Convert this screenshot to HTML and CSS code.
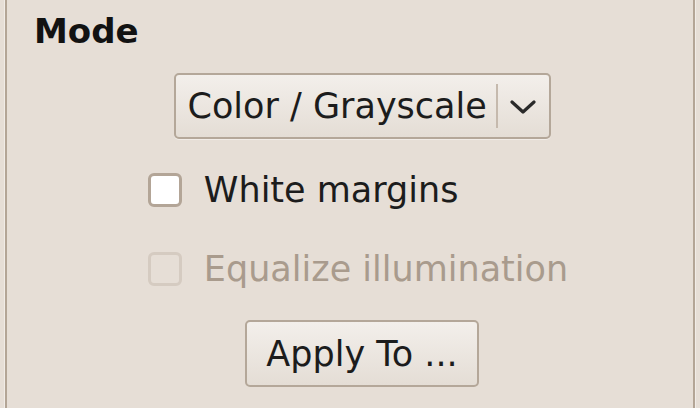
FILE: index.html
```html
<!DOCTYPE html>
<html>
<head>
<meta charset="utf-8">
<link rel="stylesheet" href="styles.css">
</head>
<body>
<div class="frame">
  <div class="content">
    <div class="title">Mode</div>
    <div class="combo">
      <span class="combo-text">Color / Grayscale</span>
      <span class="combo-sep"></span>
      <span class="combo-arrow">
        <svg width="26" height="16" viewBox="0 0 26 16"><polyline points="2,3 13,13 24,3" fill="none" stroke="#2a2a2a" stroke-width="3.2" stroke-linecap="round" stroke-linejoin="round"/></svg>
      </span>
    </div>
    <div class="checks">
      <label class="check">
        <span class="box"></span>
        <span class="check-label">White margins</span>
      </label>
      <label class="check disabled">
        <span class="box"></span>
        <span class="check-label">Equalize illumination</span>
      </label>
    </div>
    <button class="button">Apply To ...</button>
  </div>
</div>
</body>
</html>
```
FILE: styles.css
```css
html, body {
  margin: 0;
  padding: 0;
  background: #e6ded6;
}
body {
  width: 700px;
  height: 408px;
  overflow: hidden;
  font-family: "DejaVu Sans", sans-serif;
  font-size: 35px;
  color: #1c1c1c;
}
.frame {
  margin-left: 5px;
  width: 686px;
  height: 408px;
  border-left: 2px solid #b3a596;
  border-right: 2px solid #b3a596;
  box-shadow: -1px 0 0 #f1ece7, 1px 0 0 #f1ece7;
}
.content {
  display: flex;
  flex-direction: column;
  align-items: center;
  padding-left: 27px;
  padding-right: 0;
  width: 656px;
}
.title {
  align-self: flex-start;
  font-weight: bold;
  font-size: 34px;
  line-height: 40px;
  margin-top: 11px;
  color: #121212;
}
.combo {
  margin-top: 22px;
  box-sizing: border-box;
  width: 377px;
  height: 66px;
  display: flex;
  align-items: center;
  border: 2px solid #b4a799;
  border-radius: 5px;
  background: linear-gradient(#f3efeb, #e4ddd5);
  box-shadow: 0 1px 0 #f1ece7;
}
.combo-text {
  padding-left: 12px;
  line-height: 41px;
  white-space: nowrap;
  width: 308px;
}
.combo-sep {
  width: 2px;
  height: 44px;
  background: #c5b9ad;
}
.combo-arrow {
  flex: 1;
  display: flex;
  justify-content: center;
  align-items: center;
  padding-top: 2px;
}
.checks {
  margin-top: 34px;
  display: flex;
  flex-direction: column;
  gap: 45px;
  margin-left: -8px;
}
.check {
  display: flex;
  align-items: center;
  height: 34px;
  white-space: nowrap;
}
.box {
  box-sizing: border-box;
  width: 34px;
  height: 34px;
  border: 3px solid #b3a597;
  border-radius: 6px;
  background: #ffffff;
  margin-right: 22px;
}
.check-label {
  line-height: 41px;
}
.disabled .box {
  background: #e6ded6;
  border-color: #d5cbc1;
}
.disabled .check-label {
  color: #a99b8d;
}
.button {
  margin-top: 34px;
  box-sizing: border-box;
  width: 234px;
  height: 67px;
  font-family: "DejaVu Sans", sans-serif;
  font-size: 35px;
  color: #1c1c1c;
  border: 2px solid #b4a799;
  border-radius: 5px;
  background: linear-gradient(#f3efeb, #e4ddd5);
  padding: 0;
}
```
